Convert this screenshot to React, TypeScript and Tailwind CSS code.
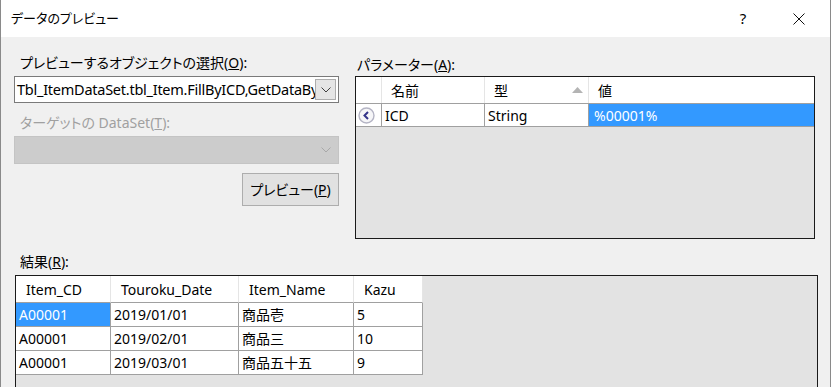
const FONT = "font-['Segoe_UI','Noto_Sans','Noto_Sans_CJK_JP',sans-serif] [font-feature-settings:'palt']";

const RESULTS = [
  { cd: "A00001", date: "2019/01/01", name: "商品壱", kazu: "5" },
  { cd: "A00001", date: "2019/02/01", name: "商品三", kazu: "10" },
  { cd: "A00001", date: "2019/03/01", name: "商品五十五", kazu: "9" },
];

function Chevron({ light }: { light?: boolean }) {
  return (
    <svg width="10" height="6" viewBox="0 0 10 6">
      <path d="M0.5 0.5 L5 5 L9.5 0.5" fill="none" stroke={light ? "#a8a8a8" : "#404040"} strokeWidth="1" />
    </svg>
  );
}

function RowIcon() {
  return (
    <svg width="19" height="19" viewBox="0 0 19 19">
      <circle cx="9.5" cy="9.5" r="7.5" fill="#f6f6f8" stroke="#b4b4c4" strokeWidth="1.4" />
      <path d="M11 6 L7.5 9.5 L11 13" fill="none" stroke="#34348a" strokeWidth="2" />
    </svg>
  );
}

function TitleBar() {
  return (
    <div className="h-[37px] bg-white flex items-center pl-[10px] shrink-0">
      <span className="text-[13px] text-black flex-1">データのプレビュー</span>
      <span className="w-[46px] text-center text-[15px] text-black mr-[10px]">?</span>
      <span className="w-[46px] flex justify-center mr-[8px]">
        <svg width="12" height="12" viewBox="0 0 12 12">
          <path d="M0.5 0.5 L11.5 11.5 M11.5 0.5 L0.5 11.5" stroke="#111" strokeWidth="1" />
        </svg>
      </span>
    </div>
  );
}

function LeftPanel() {
  return (
    <div className="w-[325px] flex flex-col">
      <div className="h-[20px] leading-[20px] pl-[6px] mt-[16px]">
        プレビューするオブジェクトの選択(<span className="underline">O</span>):
      </div>
      <div className="mt-[3px] h-[27px] border border-[#7a7a7a] bg-white flex items-center">
        <span className="flex-1 overflow-hidden whitespace-nowrap pl-[2px] text-[14.5px] tracking-[-0.25px]">
          Tbl_ItemDataSet.tbl_Item.FillByICD,GetDataByICD
        </span>
        <span className="w-[21px] h-[21px] mr-[2px] bg-[#e5e5e5] border border-[#adadad] flex items-center justify-center">
          <Chevron />
        </span>
      </div>
      <div className="h-[20px] leading-[20px] pl-[6px] mt-[10px] text-[#a0a0a0]">
        ターゲットの DataSet(<span className="underline">T</span>):
      </div>
      <div className="mt-[3px] h-[28px] bg-[#cccccc] border border-[#c4c4c4] flex items-center justify-end pr-[7px]">
        <Chevron light />
      </div>
      <div className="flex justify-end mt-[9px]">
        <button className="w-[97px] h-[33px] bg-[#e1e1e1] border border-[#adadad] text-[14px] text-black">
          プレビュー(<span className="underline">P</span>)
        </button>
      </div>
    </div>
  );
}

function ParamPanel() {
  return (
    <div className="w-[460px] flex flex-col">
      <div className="h-[20px] leading-[20px] pl-[2px] mt-[18px]">
        パラメーター(<span className="underline">A</span>):
      </div>
      <div className="mt-[1px] h-[163px] border border-[#1a1a1a] bg-[#e3e3e3] overflow-hidden">
        <div className="flex h-[27px] bg-white border-b border-[#a0a0a0]">
          <div className="w-[26px] border-r border-[#e5e5e5]" />
          <div className="w-[103px] pl-[9px] flex items-center border-r border-[#e5e5e5]">名前</div>
          <div className="w-[104px] pl-[9px] pr-[5px] flex items-center justify-between border-r border-[#e5e5e5]">
            <span>型</span>
            <svg width="11" height="6" viewBox="0 0 11 6">
              <path d="M0 6 L5.5 0 L11 6 Z" fill="#b4b4b4" />
            </svg>
          </div>
          <div className="flex-1 pl-[9px] flex items-center">値</div>
        </div>
        <div className="flex h-[23px] border-b border-[#a0a0a0]">
          <div className="w-[26px] bg-white border-r border-[#a0a0a0] flex items-center pl-[1px]">
            <RowIcon />
          </div>
          <div className="w-[103px] bg-white border-r border-[#a0a0a0] pl-[3px] flex items-center">ICD</div>
          <div className="w-[104px] bg-white border-r border-[#a0a0a0] pl-[3px] flex items-center">String</div>
          <div className="flex-1 bg-[#3399ff] text-white pl-[5px] flex items-center">%00001%</div>
        </div>
      </div>
    </div>
  );
}

function ResultsGrid() {
  const widths = ["w-[95px]", "w-[128px]", "w-[115px]", "w-[69px]"];
  const headers = ["Item_CD", "Touroku_Date", "Item_Name", "Kazu"];
  return (
    <div className="mt-[3px] ml-[14px] w-[803px] h-[120px] border border-[#1a1a1a] border-b-0 bg-[#e3e3e3]">
      <div className="flex h-[27px]">
        {headers.map((h, i) => (
          <div
            key={h}
            className={`${widths[i]} bg-white flex items-center pl-[10px] border-b border-[#a0a0a0] border-r border-r-[#e5e5e5]`}
          >
            {h}
          </div>
        ))}
      </div>
      {RESULTS.map((r, ri) => (
        <div key={ri} className="flex h-[24px]">
          {[r.cd, r.date, r.name, r.kazu].map((v, i) => (
            <div
              key={i}
              className={`${widths[i]} flex items-center pl-[3px] border-b border-r border-[#a0a0a0] ${
                ri === 0 && i === 0 ? "bg-[#3399ff] text-white" : "bg-white"
              }`}
            >
              {v}
            </div>
          ))}
        </div>
      ))}
    </div>
  );
}

export default function App() {
  return (
    <div className={`w-[831px] h-[387px] overflow-hidden bg-[#f0f0f0] border-l border-r border-[#8a8a8a] flex flex-col text-[14px] text-black ${FONT}`}>
      <TitleBar />
      <div className="flex pl-[13px] gap-[16px] h-[202px]">
        <LeftPanel />
        <ParamPanel />
      </div>
      <div className="h-[20px] leading-[20px] pl-[19px] mt-[13px]">
        結果(<span className="underline">R</span>):
      </div>
      <ResultsGrid />
    </div>
  );
}
